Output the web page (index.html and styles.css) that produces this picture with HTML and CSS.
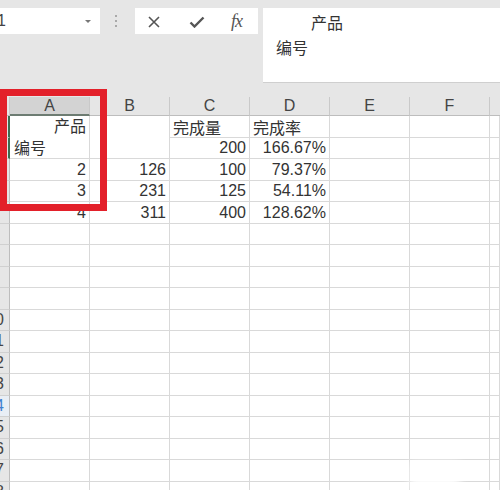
FILE: index.html
```html
<!DOCTYPE html>
<html>
<head>
<meta charset="utf-8">
<link rel="stylesheet" href="styles.css">
</head>
<body>
<div class="app">
  <div class="toolbar">
    <div class="namebox"><span class="ref">1</span><span class="caret"></span></div>
    <div class="grip"><i></i><i></i><i></i></div>
    <div class="fxbox">
      <svg class="ic-x" width="12" height="12" viewBox="0 0 12 12"><path d="M1 1L11 11M11 1L1 11" stroke="#555" stroke-width="1.6" fill="none"/></svg>
      <svg class="ic-ok" width="16" height="12" viewBox="0 0 16 12"><path d="M1.5 6.5L5.5 10.5L14.5 1.5" stroke="#555" stroke-width="2.4" fill="none"/></svg>
      <span class="fx">fx</span>
    </div>
    <div class="formula">
      <div class="fl1">产品</div>
      <div class="fl2">编号</div>
    </div>
  </div>

  <div class="sheet">
    <div class="ch corner"></div>
    <div class="ch sel">A</div>
    <div class="ch">B</div>
    <div class="ch">C</div>
    <div class="ch">D</div>
    <div class="ch">E</div>
    <div class="ch">F</div>
    <div class="ch last"></div>

    <div class="rh act"></div>
    <div class="c merged"><div class="ml1">产品</div><div class="ml2">编号</div></div>
    <div class="c mergedb"></div>
    <div class="c t">完成量</div>
    <div class="c t">完成率</div>
    <div class="c"></div><div class="c"></div><div class="c"></div>

    <div class="rh act"></div>
    <div class="c n">200</div>
    <div class="c n">166.67%</div>
    <div class="c"></div><div class="c"></div><div class="c"></div>

    <div class="rh"></div>
    <div class="c n">2</div><div class="c n">126</div><div class="c n">100</div><div class="c n">79.37%</div>
    <div class="c"></div><div class="c"></div><div class="c"></div>

    <div class="rh"></div>
    <div class="c n">3</div><div class="c n">231</div><div class="c n">125</div><div class="c n">54.11%</div>
    <div class="c"></div><div class="c"></div><div class="c"></div>

    <div class="rh"></div>
    <div class="c n">4</div><div class="c n">311</div><div class="c n">400</div><div class="c n">128.62%</div>
    <div class="c"></div><div class="c"></div><div class="c"></div>

    <div class="rh"></div><div class="c"></div><div class="c"></div><div class="c"></div><div class="c"></div><div class="c"></div><div class="c"></div><div class="c"></div>
    <div class="rh"></div><div class="c"></div><div class="c"></div><div class="c"></div><div class="c"></div><div class="c"></div><div class="c"></div><div class="c"></div>
    <div class="rh"></div><div class="c"></div><div class="c"></div><div class="c"></div><div class="c"></div><div class="c"></div><div class="c"></div><div class="c"></div>
    <div class="rh"></div><div class="c"></div><div class="c"></div><div class="c"></div><div class="c"></div><div class="c"></div><div class="c"></div><div class="c"></div>
    <div class="rh"><span>10</span></div><div class="c"></div><div class="c"></div><div class="c"></div><div class="c"></div><div class="c"></div><div class="c"></div><div class="c"></div>
    <div class="rh"><span>11</span></div><div class="c"></div><div class="c"></div><div class="c"></div><div class="c"></div><div class="c"></div><div class="c"></div><div class="c"></div>
    <div class="rh"><span>12</span></div><div class="c"></div><div class="c"></div><div class="c"></div><div class="c"></div><div class="c"></div><div class="c"></div><div class="c"></div>
    <div class="rh"><span>13</span></div><div class="c"></div><div class="c"></div><div class="c"></div><div class="c"></div><div class="c"></div><div class="c"></div><div class="c"></div>
    <div class="rh hot"><span>14</span></div><div class="c"></div><div class="c"></div><div class="c"></div><div class="c"></div><div class="c"></div><div class="c"></div><div class="c"></div>
    <div class="rh"><span>15</span></div><div class="c"></div><div class="c"></div><div class="c"></div><div class="c"></div><div class="c"></div><div class="c"></div><div class="c"></div>
    <div class="rh"><span>16</span></div><div class="c"></div><div class="c"></div><div class="c"></div><div class="c"></div><div class="c"></div><div class="c"></div><div class="c"></div>
    <div class="rh"><span>17</span></div><div class="c"></div><div class="c"></div><div class="c"></div><div class="c"></div><div class="c"></div><div class="c"></div><div class="c"></div>
    <div class="rh"><span>18</span></div><div class="c"></div><div class="c"></div><div class="c"></div><div class="c"></div><div class="c"></div><div class="c"></div><div class="c"></div>
  </div>

  <div class="redbox"></div>
  <div class="smudge"></div>
</div>
</body>
</html>
```

FILE: styles.css
```css
html, body {
  margin: 0;
  padding: 0;
  width: 500px;
  height: 490px;
  overflow: hidden;
  background: #e6e6e6;
}
.app {
  position: relative;
  width: 500px;
  height: 490px;
  overflow: hidden;
  font-family: "Liberation Sans", "Noto Sans CJK SC", sans-serif;
  color: #333;
}

/* ---------- toolbar ---------- */
.toolbar {
  height: 97px;
  box-sizing: border-box;
  padding-top: 8px;
  display: flex;
  align-items: flex-start;
}
.namebox {
  width: 100px;
  height: 26px;
  background: #fff;
  box-sizing: border-box;
  display: flex;
  align-items: center;
  justify-content: space-between;
  padding-right: 9px;
  font-size: 16px;
  color: #444;
}
.ref { margin-left: -3px; }
.caret {
  width: 0;
  height: 0;
  border-left: 3px solid transparent;
  border-right: 3px solid transparent;
  border-top: 3px solid #777;
}
.grip {
  width: 3px;
  margin-left: 15px;
  margin-top: 7px;
  display: flex;
  flex-direction: column;
  gap: 3px;
}
.grip i {
  display: block;
  width: 2px;
  height: 2px;
  background: #a9a9a9;
}
.fxbox {
  margin-left: 17px;
  width: 123px;
  height: 26px;
  background: #fff;
  display: flex;
  align-items: center;
  box-sizing: border-box;
  padding-left: 13px;
}
.ic-x { margin-top: 1px; }
.ic-ok { margin-left: 29px; margin-top: 1px; }
.fx {
  margin-left: 26px;
  font-family: "Liberation Serif", serif;
  font-style: italic;
  font-size: 18px;
  color: #555;
  letter-spacing: -1px;
}
.formula {
  margin-left: 5px;
  flex: 1;
  height: 75px;
  background: #fff;
  border-bottom: 1px solid #cfcfcf;
  box-sizing: border-box;
  padding: 2px 0 0 13px;
  font-family: "Noto Sans CJK SC", sans-serif;
  font-size: 16px;
  line-height: 25px;
  color: #333;
}
.fl1 { padding-left: 35px; }

/* ---------- sheet ---------- */
.sheet {
  display: grid;
  grid-template-columns: 10px repeat(6, 80px) 10px;
  grid-template-rows: 19px 22px 21px repeat(16, 21.5px);
  background: #fff;
}
.ch {
  background: #e6e6e6;
  border-right: 1px solid #c9c9c9;
  border-bottom: 1px solid #bdbdbd;
  box-sizing: border-box;
  font-size: 16px;
  color: #444;
  display: flex;
  align-items: center;
  justify-content: center;
  line-height: 18px;
}
.ch.sel {
  background: #d3d3d3;
  border-bottom: 2px solid #6d7c72;
}
.ch.last { border-right: none; }
.rh {
  background: #e6e6e6;
  border-right: 1px solid #bdbdbd;
  border-bottom: 1px solid #d0d0d0;
  box-sizing: border-box;
  display: flex;
  justify-content: flex-end;
  align-items: center;
  overflow: hidden;
  padding-right: 5px;
  font-size: 16px;
  color: #444;
  white-space: nowrap;
}
.rh.act { border-right: 2px solid #3d6e52; }
.rh.hot { color: #3f7fd0; background: #e9eef5; }
.c {
  border-right: 1px solid #d9d9d9;
  border-bottom: 1px solid #d9d9d9;
  box-sizing: border-box;
  font-size: 16px;
  color: #333;
  display: flex;
  align-items: flex-end;
  padding: 0 3px 1px 3px;
  white-space: nowrap;
  overflow: visible;
  line-height: 19px;
}
.c.n { justify-content: flex-end; }
.c.t {
  font-family: "Noto Sans CJK SC", sans-serif;
  line-height: 20px;
  padding-bottom: 0;
}
.merged, .mergedb { grid-row: span 2; }
.merged {
  flex-direction: column;
  align-items: stretch;
  justify-content: flex-end;
  font-family: "Noto Sans CJK SC", sans-serif;
  line-height: 22px;
  padding: 0 3px 0 4px;
}
.ml1 { text-align: right; }
.ml2 { text-align: left; }

/* ---------- overlays ---------- */
.redbox {
  position: absolute;
  left: 0;
  top: 89px;
  width: 107px;
  height: 122px;
  box-sizing: border-box;
  border: 7px solid #e3202a;
}
.smudge {
  position: absolute;
  left: 410px;
  top: 462px;
  width: 50px;
  height: 30px;
  background: rgba(255,255,255,0.85);
  filter: blur(4px);
}
```
